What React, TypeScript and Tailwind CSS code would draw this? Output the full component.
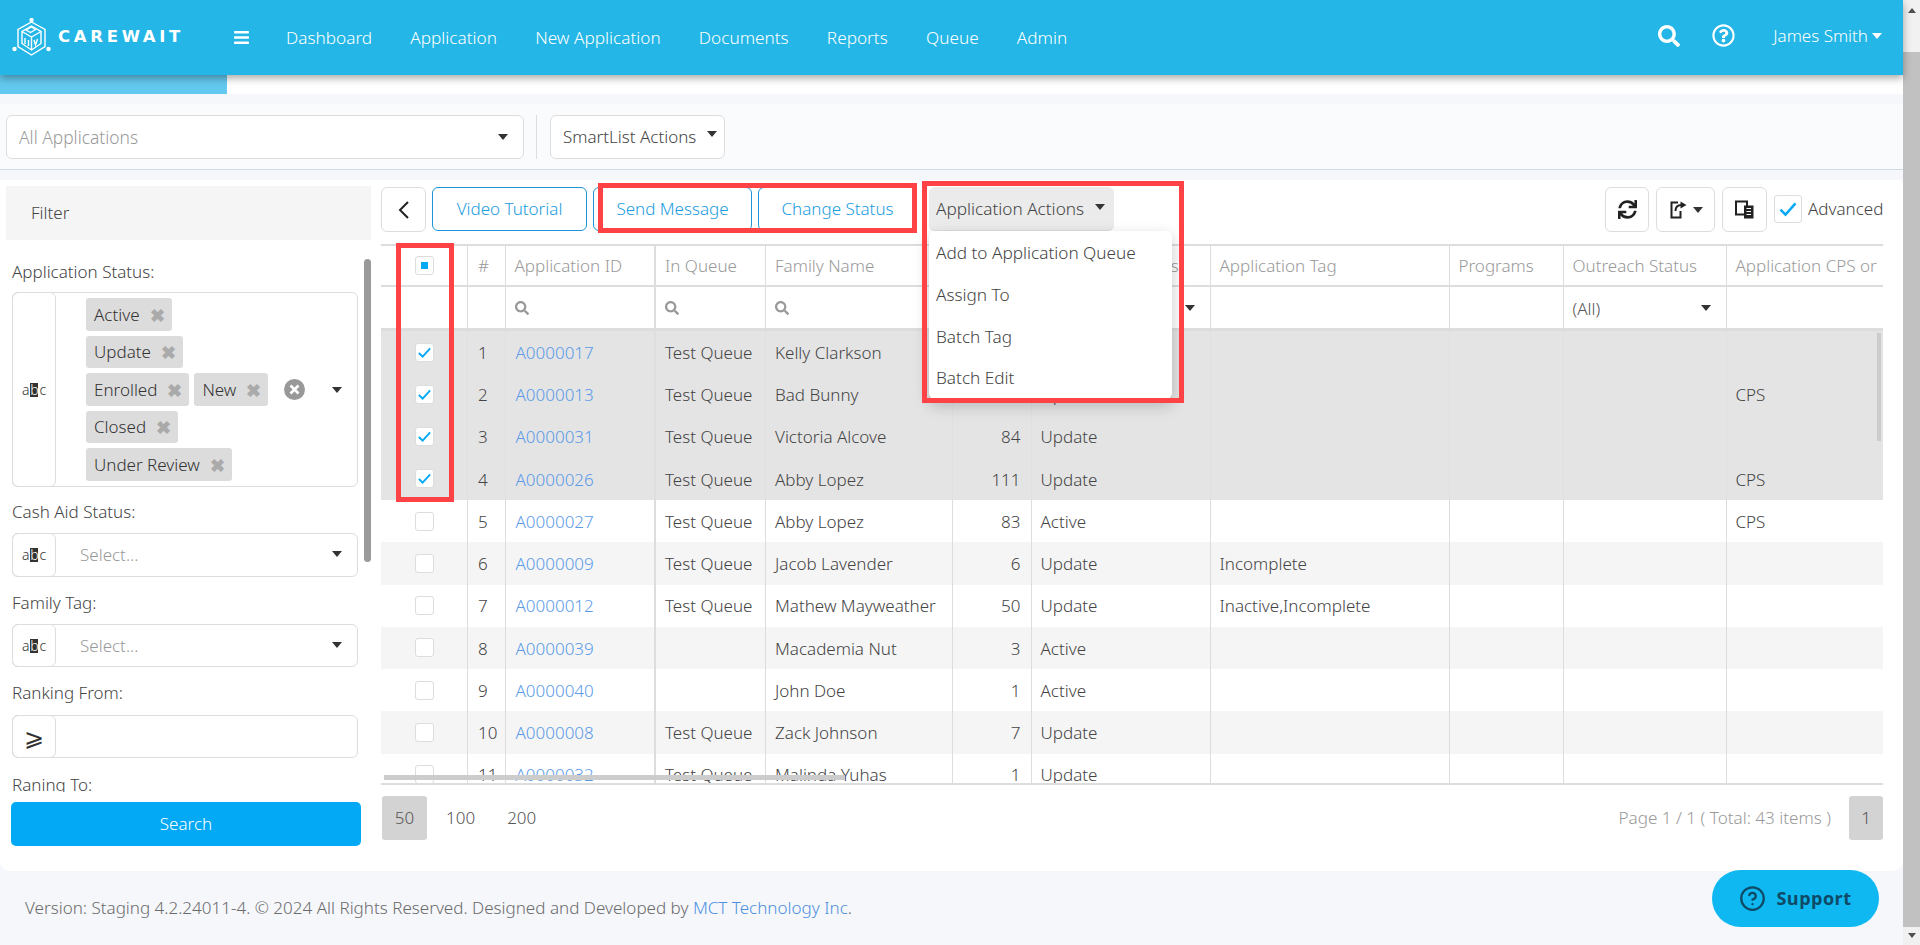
import React from "react";
import { FaBars, FaSearch, FaRegQuestionCircle, FaSync } from "react-icons/fa";
import { CircleHelp } from "lucide-react";

const cols = "grid grid-cols-[87px_37.5px_150.5px_110px_187px_78.5px_179px_239px_114px_163px_157px]";

function Caret({ c = "border-t-[#333]" }: { c?: string }) {
  return <span className={`inline-block w-0 h-0 border-x-[5.5px] border-t-[6px] border-x-transparent ${c}`} />;
}

function Check({ size = 16 }: { size?: number }) {
  return (
    <svg width={size} height={size} viewBox="0 0 16 16" fill="none" stroke="#03a9f4" strokeWidth="2">
      <path d="M2 8.5l4 4L14 3.5" />
    </svg>
  );
}

function Box({ state }: { state: "on" | "off" | "part" }) {
  return (
    <span className="ml-px w-[19px] h-[19px] bg-white border border-[#ddd] rounded-[3px] flex items-center justify-center">
      {state === "on" && <Check size={15} />}
      {state === "part" && <span className="w-[7px] h-[7px] bg-[#03a9f4]" />}
    </span>
  );
}

function Abc() {
  return (
    <span className="flex items-center text-[14px] text-[#333] leading-none">
      <span>a</span>
      <span className="mx-[1px] w-[8px] h-[14px] bg-[#333] text-white flex items-center justify-center">b</span>
      <span>c</span>
    </span>
  );
}

function Tag({ label }: { label: string }) {
  return (
    <span className="h-[32.5px] bg-[#dcdcdc] rounded-[3px] pl-[8px] pr-[7px] flex items-center text-[#333] whitespace-nowrap">
      {label}
      <span className="ml-[10px] text-[#aaa] text-[18px] font-bold leading-none">✖</span>
    </span>
  );
}

function Label({ text, mt }: { text: string; mt: string }) {
  return <div className={`h-[24px] leading-[24px] text-[#444] whitespace-nowrap ${mt}`}>{text}</div>;
}

function AbcCell() {
  return (
    <span className="w-[44px] self-stretch border border-[#ddd] rounded-[6px] flex items-center justify-center -my-px -ml-px">
      <Abc />
    </span>
  );
}

function SelectField({ mt, h }: { mt: string; h: string }) {
  return (
    <div className={`w-[346px] ${h} ${mt} border border-[#ddd] rounded-[6px] flex items-center`}>
      <AbcCell />
      <span className="ml-[24px] text-[#999] flex-1">Select...</span>
      <span className="mr-[15px] -mt-[2px] flex"><Caret /></span>
    </div>
  );
}

function IconBtn({ w, children }: { w: string; children: React.ReactNode }) {
  return (
    <span className={`${w} h-[45px] border border-[#ddd] rounded-[6px] flex items-center justify-center gap-[5px] text-[#222]`}>
      {children}
    </span>
  );
}

function OutlineBtn({ w, text }: { w: string; text: string }) {
  return (
    <span className={`${w} h-[44px] border border-[#1b95d8] rounded-[6px] flex items-center justify-center text-[#1c9ce0] whitespace-nowrap`}>
      {text}
    </span>
  );
}

type Row = { n: number; id: string; q: string; name: string; c: string; st: string; tag: string; cps: string };
const rows: Row[] = [
  { n: 1, id: "A0000017", q: "Test Queue", name: "Kelly Clarkson", c: "", st: "Update", tag: "", cps: "" },
  { n: 2, id: "A0000013", q: "Test Queue", name: "Bad Bunny", c: "", st: "Update", tag: "", cps: "CPS" },
  { n: 3, id: "A0000031", q: "Test Queue", name: "Victoria Alcove", c: "84", st: "Update", tag: "", cps: "" },
  { n: 4, id: "A0000026", q: "Test Queue", name: "Abby Lopez", c: "111", st: "Update", tag: "", cps: "CPS" },
  { n: 5, id: "A0000027", q: "Test Queue", name: "Abby Lopez", c: "83", st: "Active", tag: "", cps: "CPS" },
  { n: 6, id: "A0000009", q: "Test Queue", name: "Jacob Lavender", c: "6", st: "Update", tag: "Incomplete", cps: "" },
  { n: 7, id: "A0000012", q: "Test Queue", name: "Mathew Mayweather", c: "50", st: "Update", tag: "Inactive,Incomplete", cps: "" },
  { n: 8, id: "A0000039", q: "", name: "Macademia Nut", c: "3", st: "Active", tag: "", cps: "" },
  { n: 9, id: "A0000040", q: "", name: "John Doe", c: "1", st: "Active", tag: "", cps: "" },
  { n: 10, id: "A0000008", q: "Test Queue", name: "Zack Johnson", c: "7", st: "Update", tag: "", cps: "" },
  { n: 11, id: "A0000032", q: "Test Queue", name: "Malinda Yuhas", c: "1", st: "Update", tag: "", cps: "" },
];

const headers = ["", "#", "Application ID", "In Queue", "Family Name", "", "Application Status", "Application Tag", "Programs", "Outreach Status", "Application CPS or"];

function DataRow({ r }: { r: Row }) {
  const sel = r.n <= 4;
  const bg = sel ? "bg-[#e4e4e4]" : r.n % 2 === 0 ? "bg-[#f5f5f5]" : "bg-white";
  const b = sel ? "border-[#dfdfdf]" : "border-[#ddd]";
  const cell = `border-r ${b} flex items-center pt-[1px] px-[10px] whitespace-nowrap overflow-hidden`;
  return (
    <div className={`${cols} h-[42.25px] ${bg} text-[#444]`}>
      <div className={`border-r ${b} flex items-center justify-center`}>
        <Box state={sel ? "on" : "off"} />
      </div>
      <div className={cell}>{r.n}</div>
      <div className={`border-r-2 ${b} flex items-center pt-[1px] pl-[10px] text-[#5b9be8]`}>{r.id}</div>
      <div className={`${cell} pl-[9px]`}>{r.q}</div>
      <div className={`${cell} pl-[9px]`}>{r.name}</div>
      <div className={`${cell} justify-end`}>{r.c}</div>
      <div className={`${cell} pl-[9px]`}>{r.st}</div>
      <div className={`${cell} pl-[9px]`}>{r.tag}</div>
      <div className={cell} />
      <div className={cell} />
      <div className="flex items-center pt-[1px] px-[9px]">{r.cps}</div>
    </div>
  );
}

export default function App() {
  return (
    <div className="h-[945px] w-[1920px] overflow-hidden flex bg-[#f5f7fb] text-[17px] font-[350] font-['Noto_Sans',sans-serif]">
      <div className="w-[1903px] h-full flex flex-col relative">
        {/* header */}
        <header className="h-[75px] shrink-0 bg-[#23b6e6] text-white flex items-center shadow-[0_3px_8px_rgba(0,0,0,0.35)] z-10 relative">
          <svg className="ml-[12px]" width="39" height="40" viewBox="0 0 39 40" fill="none" stroke="white" strokeWidth="1.4">
            <path d="M19.5 4L33 11.5v17L19.5 37 6 28.5v-17z" />
            <path d="M19.5 8l9.5 5.5v12L19.5 32 10 25.5v-12z" />
            <path d="M10 13.5l9.5 5.5 9.5-5.5M19.5 19v13" />
            <path d="M14 12l5.5-3 4 2.5-5 3zM13 20v6M16.5 22v6M22 22l1.5 5 2-6" />
            <circle cx="19.5" cy="2" r="1.5" fill="white" />
            <circle cx="2.5" cy="31" r="1.5" fill="white" />
            <circle cx="36.5" cy="31" r="1.5" fill="white" />
          </svg>
          <span className="ml-[7px] w-[124px] font-['DejaVu_Sans',sans-serif] font-bold text-[16.5px] tracking-[3.7px] leading-none whitespace-nowrap">CAREWAIT</span>
          <FaBars className="ml-[51px] mr-[36px]" size={17} />
          <nav className="flex gap-[38.2px] whitespace-nowrap text-[17.2px]">
            <span>Dashboard</span>
            <span>Application</span>
            <span>New Application</span>
            <span>Documents</span>
            <span>Reports</span>
            <span>Queue</span>
            <span>Admin</span>
          </nav>
          <div className="ml-auto flex items-center -mt-[4px] pr-[21px]">
            <FaSearch size={22} />
            <FaRegQuestionCircle size={23} className="ml-[32px]" />
            <span className="ml-[38px] whitespace-nowrap">James Smith</span>
            <span className="ml-[4px] flex"><Caret c="border-t-white" /></span>
          </div>
        </header>
        {/* tab strip */}
        <div className="h-[19px] shrink-0 bg-white">
          <div className="w-[227px] h-full bg-[#63c9ee]" />
        </div>
        {/* smartlist bar */}
        <div className="h-[66px] mt-[10px] shrink-0 bg-[#fafbfd] border-b border-[#d0d9e4] flex items-center pl-[6px]">
          <div className="w-[518px] h-[44px] mt-px bg-white border border-[#ddd] rounded-[6px] flex items-center justify-between pl-[12px] pr-[15px] text-[#999] text-[17.4px]">
            All Applications
            <Caret />
          </div>
          <span className="w-px h-[44px] bg-[#ddd] ml-[12px]" />
          <div className="ml-[13px] w-[175px] h-[44px] bg-white border border-[#ddd] rounded-[6px] flex items-center pl-[12px] text-[#444] whitespace-nowrap">
            SmartList Actions
            <span className="ml-[11px] -mt-[6px] flex"><Caret /></span>
          </div>
        </div>
        {/* card */}
        <div className="h-[691px] mt-[10px] shrink-0 bg-white rounded-b-[10px] rounded-tr-[4px] flex">
          {/* sidebar */}
          <aside className="w-[381px] shrink-0 pl-[6px] pt-[6px]">
            <div className="w-[365px] h-[54px] bg-[#f5f5f5] flex items-center pl-[25px] text-[#444]">Filter</div>
            <div className="relative w-[365px] h-[552px] overflow-hidden pl-[6px] pt-[20px]">
              <Label text="Application Status:" mt="" />
              <div className="w-[346px] h-[195px] mt-[8px] border border-[#ddd] rounded-[6px] flex items-center">
                <AbcCell />
                <div className="w-[190px] ml-[30px] flex flex-col items-start gap-[5px]">
                  <Tag label="Active" />
                  <Tag label="Update" />
                  <div className="flex gap-[5px]">
                    <Tag label="Enrolled" />
                    <Tag label="New" />
                  </div>
                  <Tag label="Closed" />
                  <Tag label="Under Review" />
                </div>
                <span className="ml-[8px] w-[21px] h-[21px] rounded-full bg-[#999] flex items-center justify-center">
                  <svg width="11" height="11" viewBox="0 0 11 11" stroke="#fff" strokeWidth="2.6"><path d="M1.5 1.5l8 8M9.5 1.5l-8 8" /></svg>
                </span>
                <span className="ml-[27px] flex"><Caret /></span>
              </div>
              <Label text="Cash Aid Status:" mt="mt-[13px]" />
              <SelectField mt="mt-[9px]" h="h-[44px]" />
              <Label text="Family Tag:" mt="mt-[14px]" />
              <SelectField mt="mt-[9px]" h="h-[43px]" />
              <Label text="Ranking From:" mt="mt-[14px]" />
              <div className="w-[346px] h-[43px] mt-[10px] border border-[#ddd] rounded-[6px] flex items-center">
                <span className="w-[44px] self-stretch border border-[#ddd] rounded-[6px] flex items-center justify-center -my-px -ml-px text-[#333] text-[24px] leading-none">⩾</span>
              </div>
              <Label text="Raning To:" mt="mt-[15px]" />
              <div className="absolute left-[358px] top-[19px] w-[7px] h-[303px] bg-[#9a9a9a] rounded-[4px]" />
            </div>
            <button className="mt-[10px] ml-[5px] w-[350px] h-[44px] bg-[#03a9f4] rounded-[5px] text-white">Search</button>
          </aside>
          {/* content */}
          <section className="w-[1502px] shrink-0">
            <div className="h-[64px] pt-[7px] flex items-start relative">
              <IconBtn w="w-[45px]">
                <svg width="14" height="20" viewBox="0 0 14 20" fill="none" stroke="#222" strokeWidth="2"><path d="M11 2L3 10l8 8" /></svg>
              </IconBtn>
              <div className="ml-[6px] flex gap-[6px]">
                <OutlineBtn w="w-[155px]" text="Video Tutorial" />
                <OutlineBtn w="w-[159px]" text="Send Message" />
                <OutlineBtn w="w-[159px]" text="Change Status" />
              </div>
              <div className="relative ml-[12px]">
                <div className="w-[185px] h-[44px] bg-[#ebebeb] rounded-[6px] border-b border-[#ddd] flex items-center pl-[7px] text-[#444] whitespace-nowrap text-[17.2px]">
                  Application Actions
                  <span className="ml-[11px] -mt-[4px] flex"><Caret /></span>
                </div>
                <div className="absolute left-0 top-[44px] z-20 w-[243px] h-[168px] bg-white rounded-[6px] shadow-[0_6px_16px_rgba(0,0,0,0.22)] pl-[7px] pt-[1.5px] text-[#444] text-[17.2px] flex flex-col whitespace-nowrap">
                  <span className="h-[41.6px] shrink-0 flex items-center">Add to Application Queue</span>
                  <span className="h-[41.6px] shrink-0 flex items-center">Assign To</span>
                  <span className="h-[41.6px] shrink-0 flex items-center">Batch Tag</span>
                  <span className="h-[41.6px] shrink-0 flex items-center">Batch Edit</span>
                </div>
              </div>
              <div className="ml-auto flex items-start gap-[7px]">
                <IconBtn w="w-[44px]"><FaSync size={19} /></IconBtn>
                <IconBtn w="w-[59px]">
                  <svg width="19" height="19" viewBox="0 0 19 19" fill="none" stroke="#222" strokeWidth="2">
                    <path d="M9 2.5H2.5v15h9V11" />
                    <path d="M6.5 11c0-4 2-6 6-6" />
                    <path d="M11.5 1.5L17.5 5l-6 3.5z" fill="#222" stroke="none" />
                  </svg>
                  <Caret />
                </IconBtn>
                <IconBtn w="w-[45px]">
                  <svg width="21" height="21" viewBox="0 0 21 21" fill="none">
                    <path d="M2 2.5h11v13H2z" stroke="#222" strokeWidth="2" />
                    <path d="M10 6.5h9.5v13H10z" fill="#222" />
                    <path d="M12.5 9.5h4.5M12.5 12.5h4.5M12.5 15.5h4.5" stroke="#fff" strokeWidth="1.2" />
                  </svg>
                </IconBtn>
                <div className="flex items-center mt-[8px]">
                  <span className="w-[28px] h-[28px] border border-[#ddd] rounded-[3px] flex items-center justify-center"><Check size={20} /></span>
                  <span className="ml-[6px] w-[75px] text-[#444] whitespace-nowrap">Advanced</span>
                </div>
              </div>
            </div>
            {/* table */}
            <div className="relative h-[541px] border-y border-t-2 border-b-2 border-[#ddd] overflow-hidden">
              <div className={`${cols} h-[41px] border-b-2 border-[#ddd] text-[#999]`}>
                {headers.map((h, i) => (
                  <div key={i} className={`${i === 2 ? "border-r-2" : i === 10 ? "" : "border-r"} border-[#ddd] flex items-center ${i === 0 ? "justify-center" : i === 1 ? "pl-[10px]" : "pl-[9px]"} whitespace-nowrap overflow-hidden`}>
                    {i === 0 ? <Box state="part" /> : h}
                  </div>
                ))}
              </div>
              <div className={`${cols} h-[44px] border-b-[3px] border-[#ddd] text-[#555]`}>
                {headers.map((_, i) => (
                  <div key={i} className={`${i === 2 ? "border-r-2" : i === 10 ? "" : "border-r"} border-[#ddd] flex items-center pl-[9px]`}>
                    {(i === 2 || i === 3 || i === 4) && <FaSearch size={14} className="text-[#999]" />}
                    {(i === 6 || i === 9) && (
                      <div className="w-full flex items-center justify-between pr-[15px]">
                        <span className="pt-[3px]">(All)</span>
                        <Caret />
                      </div>
                    )}
                  </div>
                ))}
              </div>
              {rows.map((r) => <DataRow key={r.n} r={r} />)}
              <div className="absolute left-[3px] bottom-[3px] w-[461px] h-[5px] bg-[#cccccc]" />
              <div className="absolute right-[2px] top-[87px] w-[4px] h-[108px] bg-[#cccccc]" />
            </div>
            {/* pagination */}
            <div className="mt-[11px] flex items-center text-[#555]">
              <span className="ml-px w-[45px] h-[44px] bg-[#d3d3d3] rounded-[3px] flex items-center justify-center">50</span>
              <span className="ml-[19px]">100</span>
              <span className="ml-[32px]">200</span>
              <span className="ml-auto text-[#999] whitespace-nowrap text-[17.1px]">Page 1 / 1 ( Total: 43 items )</span>
              <span className="ml-[18px] w-[34px] h-[44px] bg-[#d3d3d3] rounded-[3px] flex items-center justify-center">1</span>
            </div>
          </section>
        </div>
        {/* footer */}
        <footer className="flex-1 flex items-center pl-[25px] text-[#6b6b6b] whitespace-nowrap text-[17.05px]">
          <span>Version: Staging 4.2.24011-4. © 2024 All Rights Reserved. Designed and Developed by <span className="text-[#4d90e0]">MCT Technology Inc</span>.</span>
        </footer>
        <div className="absolute left-[1712px] top-[870px] w-[167px] h-[57px] rounded-full bg-[#0fb8f0] flex items-center justify-center gap-[10px] text-[#0e4a66] font-bold text-[18px] font-['Open_Sans',sans-serif] tracking-[0.5px]">
          <CircleHelp size={27} strokeWidth={2} />
          Support
        </div>
        {/* annotation boxes */}
        <div className="absolute left-[396px] top-[243px] w-[58px] h-[259px] border-[5.5px] border-[#ff4245] z-30" />
        <div className="absolute left-[598px] top-[183px] w-[319px] h-[50px] border-[5.5px] border-[#ff4245] z-30" />
        <div className="absolute left-[922px] top-[181px] w-[262px] h-[222px] border-[5.5px] border-[#ff4245] z-30" />
      </div>
      {/* page scrollbar */}
      <div className="w-[17px] h-full bg-[#f1f1f1] flex flex-col items-center">
        <div className="h-[52px] pt-[5px] w-full flex justify-center">
          <span className="w-0 h-0 mt-[3px] border-x-[4px] border-b-[5px] border-x-transparent border-b-[#505050]" />
        </div>
        <div className="w-full h-[875px] bg-[#c1c1c1]" />
        <div className="mt-[6px] w-0 h-0 border-x-[4px] border-t-[5px] border-x-transparent border-t-[#505050]" />
      </div>
    </div>
  );
}
